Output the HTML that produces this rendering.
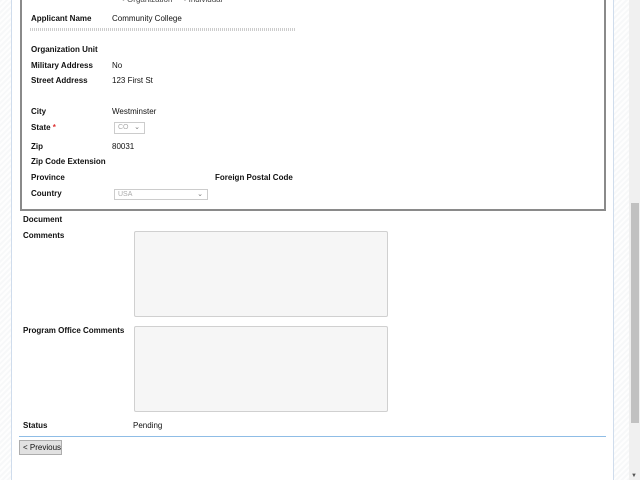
<!DOCTYPE html>
<html><head><style>
*{margin:0;padding:0;box-sizing:border-box}
body{width:640px;height:480px;overflow:hidden;background:#fff;font-family:"Liberation Sans",Verdana,sans-serif;font-size:8px;color:#111;position:relative}
.hatch{position:absolute;top:0;height:480px;background:repeating-linear-gradient(135deg,#f7f8f9 0 2px,#fefefe 2px 4px)}
.a{position:absolute;white-space:nowrap;line-height:10px;margin-top:1px}
.b{font-weight:bold}
.ta{position:absolute;background:#f6f6f6;border:1px solid #d0d0d0;border-radius:2px}
.sel{position:absolute;border:1px solid #ccc;color:#aaa;background:#fff;font-size:7px;line-height:10px;padding-left:3px}
.sel span{position:absolute;right:4px;top:0;color:#777}
</style></head><body>
<div class="hatch" style="left:0;width:11px"></div>
<div style="position:absolute;left:11px;top:0;width:1px;height:480px;background:#cfdcec"></div>
<div class="hatch" style="left:614px;width:15px"></div>
<div style="position:absolute;left:613px;top:0;width:1px;height:480px;background:#cfdcec"></div>
<div style="position:absolute;left:629px;top:0;width:11px;height:480px;background:#f0f0f0"></div>
<div style="position:absolute;left:631px;top:203px;width:8px;height:220px;background:#c1c1c1"></div>
<div class="a" style="left:631px;top:470px;font-size:6px;color:#555">▼</div>

<div style="position:absolute;left:20px;top:-10px;width:586px;height:221px;border:2px solid #8a8a8a;border-top:none"></div>
<div class="a" style="left:122px;top:-6px;color:#444">◦ Organization &nbsp;&nbsp;&nbsp; ◦ Individual</div>
<div class="a b" style="left:31px;top:13px">Applicant Name</div>
<div class="a" style="left:112px;top:13px">Community College</div>
<div style="position:absolute;left:30px;top:28px;width:266px;height:3px;background:repeating-linear-gradient(90deg,#ccc 0 1px,transparent 1px 2px)"></div>
<div class="a b" style="left:31px;top:44px">Organization Unit</div>
<div class="a b" style="left:31px;top:60px">Military Address</div>
<div class="a" style="left:112px;top:60px">No</div>
<div class="a b" style="left:31px;top:75px">Street Address</div>
<div class="a" style="left:112px;top:75px">123 First St</div>
<div class="a b" style="left:31px;top:106px">City</div>
<div class="a" style="left:112px;top:106px">Westminster</div>
<div class="a b" style="left:31px;top:122px">State <span style="color:#d33">*</span></div>
<div class="sel" style="left:114px;top:122px;width:31px;height:12px">CO<span>⌄</span></div>
<div class="a b" style="left:31px;top:141px">Zip</div>
<div class="a" style="left:112px;top:141px">80031</div>
<div class="a b" style="left:31px;top:156px">Zip Code Extension</div>
<div class="a b" style="left:31px;top:172px">Province</div>
<div class="a b" style="left:215px;top:172px">Foreign Postal Code</div>
<div class="a b" style="left:31px;top:188px">Country</div>
<div class="sel" style="left:114px;top:189px;width:94px;height:11px">USA<span>⌄</span></div>

<div class="a b" style="left:23px;top:214px">Document</div>
<div class="a b" style="left:23px;top:230px">Comments</div>
<div class="ta" style="left:134px;top:231px;width:254px;height:86px"></div>
<div class="a b" style="left:23px;top:325px">Program Office Comments</div>
<div class="ta" style="left:134px;top:326px;width:254px;height:86px"></div>
<div class="a b" style="left:23px;top:420px">Status</div>
<div class="a" style="left:133px;top:420px">Pending</div>
<div style="position:absolute;left:19px;top:436px;width:587px;height:1px;background:#8fbde6"></div>
<div class="a" style="left:19px;top:439px;width:43px;height:15px;background:#e1e1e1;border:1px solid #adadad;line-height:13px;padding-left:3px">&lt; Previous</div>
</body></html>
